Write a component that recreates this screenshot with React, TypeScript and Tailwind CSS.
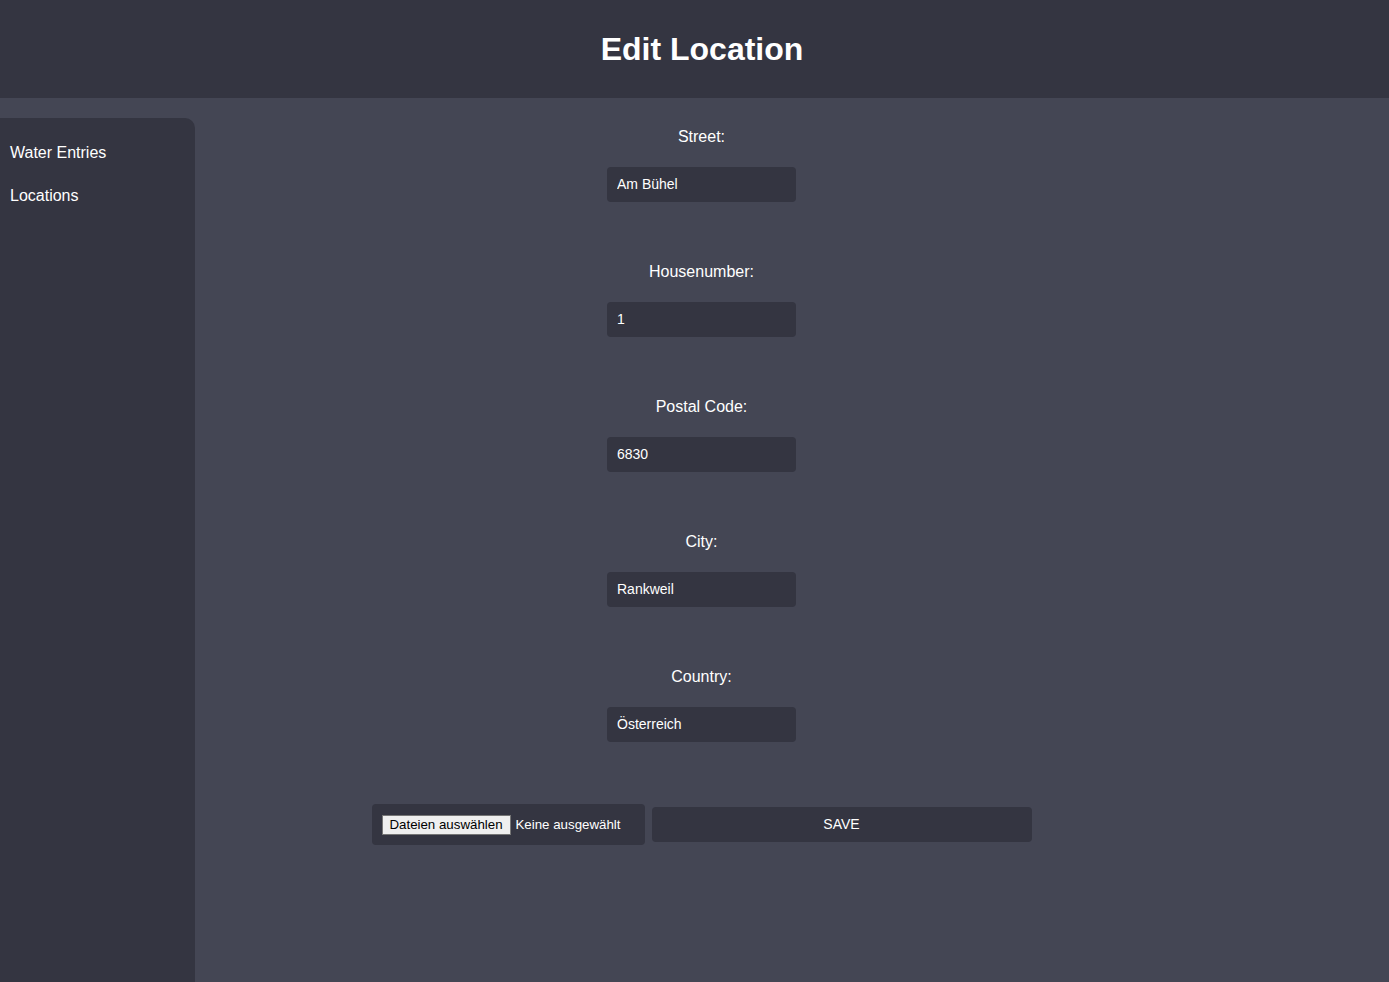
const fields = [
  { label: "Street:", value: "Am Bühel" },
  { label: "Housenumber:", value: "1" },
  { label: "Postal Code:", value: "6830" },
  { label: "City:", value: "Rankweil" },
  { label: "Country:", value: "Österreich" },
];

const Sidebar = () => {
  return (
    <aside className="mt-5 w-[195px] shrink-0 rounded-tr-[10px] bg-[#343541] pt-[26px]">
      <a className="block px-[10px] text-[16px] leading-[18px] text-white">Water Entries</a>
      <a className="mt-[25px] block px-[10px] text-[16px] leading-[18px] text-white">Locations</a>
    </aside>
  );
};

const App = () => {
  return (
    <div
      className="flex min-h-[982px] flex-col bg-[#444654] text-white"
      style={{ fontFamily: '"Liberation Sans", Arial, sans-serif' }}
    >
      <header className="flex h-[98px] items-center justify-center bg-[#343541] pl-[15px]">
        <h1 className="text-[32px] font-bold leading-none">Edit Location</h1>
      </header>

      <div className="flex flex-1">
        <Sidebar />

        {/* form */}
        <main className="flex flex-1 flex-col items-center pr-[181px] pt-[30px]">
          {fields.map((f, i) => (
            <div key={f.label} className={`flex flex-col items-center ${i > 0 ? "mt-[61px]" : ""}`}>
              <label className="text-[16px] leading-[18px]">{f.label}</label>
              <input
                defaultValue={f.value}
                className="mt-[21px] h-[35px] w-[189px] rounded-[4px] bg-[#343541] px-[10px] pb-[1px] text-[14px] text-white outline-none"
              />
            </div>
          ))}

          <div className="mt-[62px] flex items-center gap-[7px]">
            <div className="flex h-[41px] w-[273px] items-center rounded-[4px] bg-[#343541] px-[10px]">
              <button className="h-[20px] w-[129px] border border-[#767676] bg-[#efefef] text-[13.3px] leading-none text-black">
                Dateien auswählen
              </button>
              <span className="ml-[5px] text-[13.3px] text-white">Keine ausgewählt</span>
            </div>
            <button className="h-[35px] w-[380px] rounded-[4px] bg-[#343541] text-[14px] text-white">SAVE</button>
          </div>
        </main>
      </div>
    </div>
  );
};

export default App;
